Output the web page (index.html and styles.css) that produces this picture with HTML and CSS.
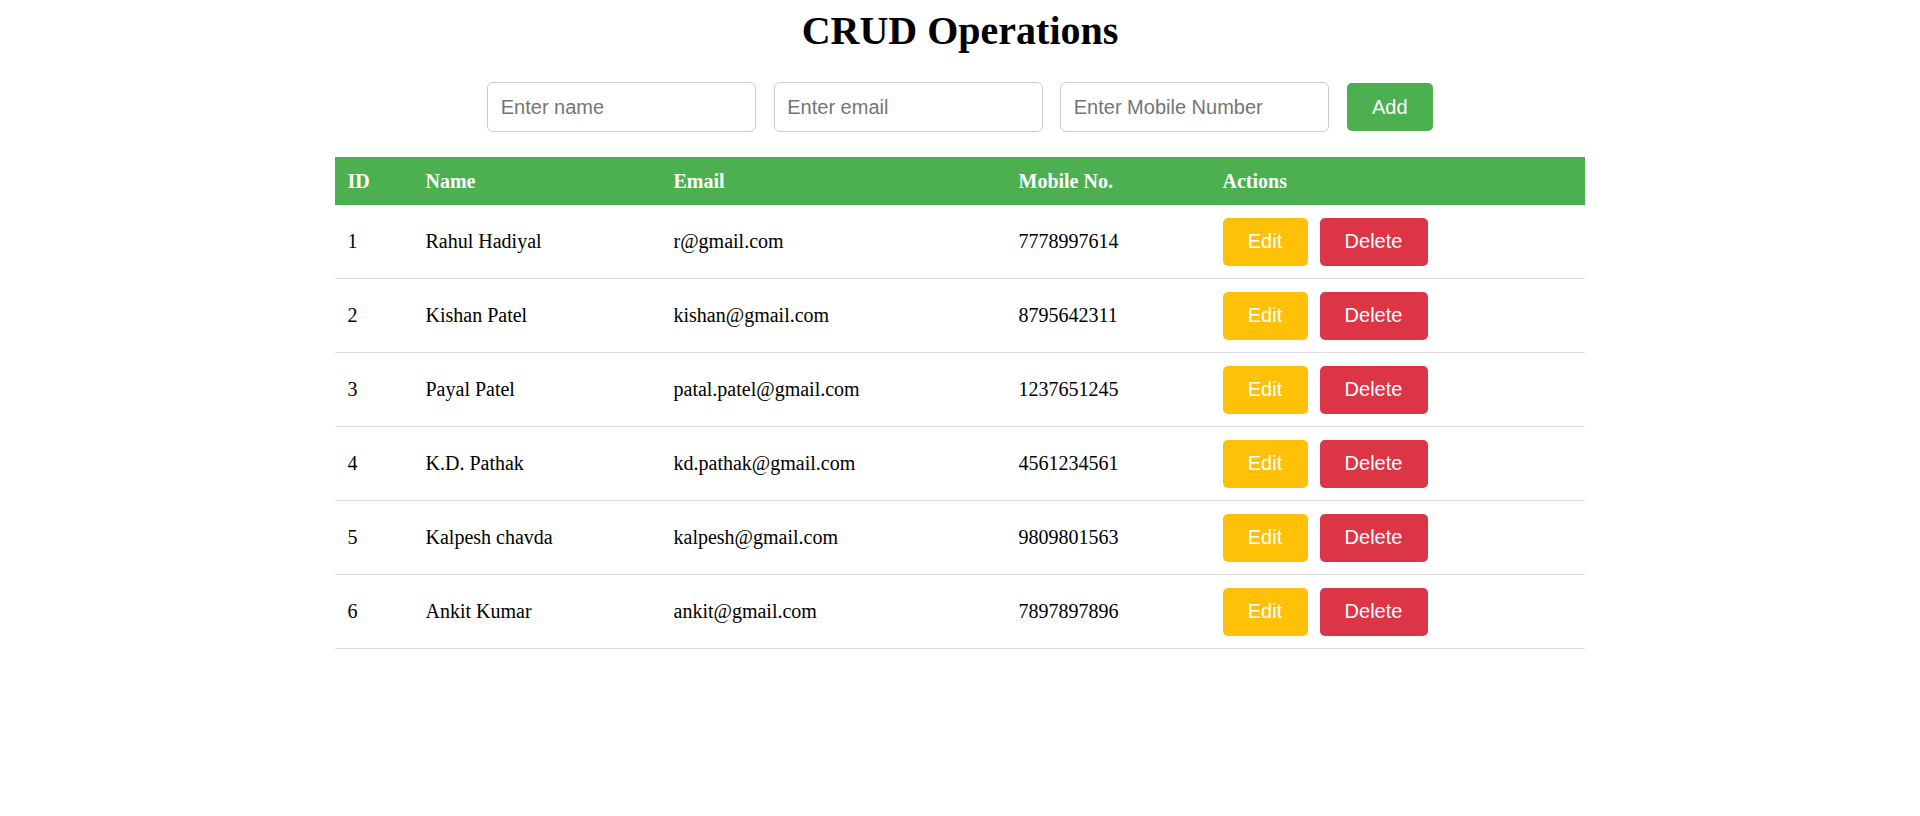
FILE: index.html
```html
<!DOCTYPE html>
<html lang="en">
<head>
<meta charset="UTF-8">
<title>CRUD Operations</title>
<link rel="stylesheet" href="styles.css">
</head>
<body>
<div class="app">
  <h1 class="title">CRUD Operations</h1>
  <form class="entry-form">
    <input class="field" type="text" placeholder="Enter name">
    <input class="field" type="email" placeholder="Enter email">
    <input class="field" type="text" placeholder="Enter Mobile Number">
    <button type="button" class="btn btn-add">Add</button>
  </form>
  <table class="data-table">
    <colgroup>
      <col class="c-id"><col class="c-name"><col class="c-email"><col class="c-mobile"><col class="c-actions">
    </colgroup>
    <thead>
      <tr><th>ID</th><th>Name</th><th>Email</th><th>Mobile No.</th><th>Actions</th></tr>
    </thead>
    <tbody>
      <tr><td>1</td><td>Rahul Hadiyal</td><td>r@gmail.com</td><td>7778997614</td><td><div class="actions"><button class="btn btn-edit">Edit</button><button class="btn btn-delete">Delete</button></div></td></tr>
      <tr><td>2</td><td>Kishan Patel</td><td>kishan@gmail.com</td><td>8795642311</td><td><div class="actions"><button class="btn btn-edit">Edit</button><button class="btn btn-delete">Delete</button></div></td></tr>
      <tr><td>3</td><td>Payal Patel</td><td>patal.patel@gmail.com</td><td>1237651245</td><td><div class="actions"><button class="btn btn-edit">Edit</button><button class="btn btn-delete">Delete</button></div></td></tr>
      <tr><td>4</td><td>K.D. Pathak</td><td>kd.pathak@gmail.com</td><td>4561234561</td><td><div class="actions"><button class="btn btn-edit">Edit</button><button class="btn btn-delete">Delete</button></div></td></tr>
      <tr><td>5</td><td>Kalpesh chavda</td><td>kalpesh@gmail.com</td><td>9809801563</td><td><div class="actions"><button class="btn btn-edit">Edit</button><button class="btn btn-delete">Delete</button></div></td></tr>
      <tr><td>6</td><td>Ankit Kumar</td><td>ankit@gmail.com</td><td>7897897896</td><td><div class="actions"><button class="btn btn-edit">Edit</button><button class="btn btn-delete">Delete</button></div></td></tr>
    </tbody>
  </table>
</div>
</body>
</html>
```
FILE: styles.css
```css
html, body {
  margin: 0;
  padding: 0;
  background: #ffffff;
}

body {
  font-family: "Liberation Serif", "Times New Roman", serif;
  color: #000;
}

.app {
  padding-top: 8px;
}

.title {
  margin: 0;
  text-align: center;
  font-family: "Liberation Serif", "Times New Roman", serif;
  font-weight: bold;
  font-size: 40px;
  line-height: 46px;
}

.entry-form {
  margin: 28px 0 0;
  display: flex;
  justify-content: center;
  align-items: center;
  gap: 17.5px;
}

.field {
  box-sizing: border-box;
  width: 269px;
  height: 50px;
  padding: 12px 12.5px;
  border: 1px solid #cccccc;
  border-radius: 6px;
  font-family: "Liberation Sans", Arial, sans-serif;
  font-size: 20px;
  color: #000;
  outline: none;
}

.field::placeholder {
  color: #757575;
}

.btn {
  box-sizing: border-box;
  height: 48px;
  padding: 0;
  border: none;
  border-radius: 5px;
  font-family: "Liberation Sans", Arial, sans-serif;
  font-size: 20px;
  color: #ffffff;
  cursor: pointer;
}

.btn-add {
  background: #4caf50;
  width: 86px;
}

.btn-edit {
  background: #ffc107;
  width: 85px;
}

.btn-delete {
  background: #dc3545;
  width: 108px;
}

.data-table {
  width: 1250px;
  margin: 25px auto 0;
  border-collapse: collapse;
  table-layout: fixed;
  font-family: "Liberation Serif", "Times New Roman", serif;
  font-size: 20px;
}

.c-id { width: 78px; }
.c-name { width: 248px; }
.c-email { width: 345px; }
.c-mobile { width: 204px; }
.c-actions { width: 375px; }

.data-table th {
  background: #4caf50;
  color: #ffffff;
  font-weight: bold;
  text-align: left;
  padding: 12.5px;
  line-height: 23px;
}

.data-table td {
  padding: 12.5px;
  border-bottom: 1px solid #dddddd;
  line-height: 23px;
  vertical-align: middle;
}

.actions {
  display: flex;
  gap: 12px;
}
```
